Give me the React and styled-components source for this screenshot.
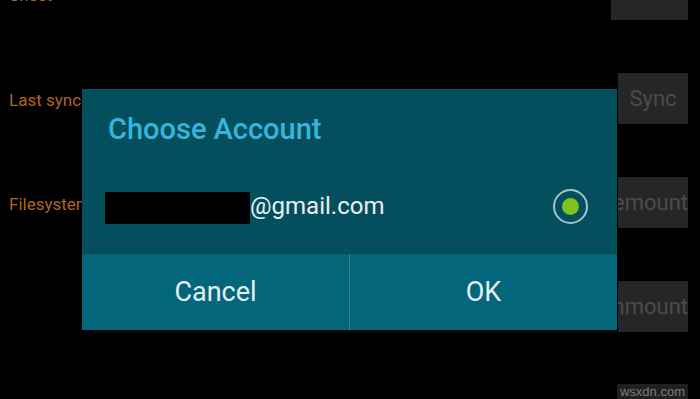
import React from "react";
import styled, { createGlobalStyle } from "styled-components";

const GlobalStyle = createGlobalStyle`
  html, body {
    margin: 0;
    padding: 0;
    background: #000;
    width: 700px;
    height: 399px;
    overflow: hidden;
    font-family: Roboto, "Noto Sans", sans-serif;
  }
`;

const Root = styled.div`
  position: relative;
  width: 700px;
  height: 399px;
  overflow: hidden;
  background: #000;
`;

const Settings = styled.div`
  display: flex;
  flex-direction: column;
  gap: 53px;
  padding: 0 12px 0 9px;
  margin-top: -31px;
`;

const Row = styled.div`
  display: flex;
  align-items: center;
  justify-content: space-between;
  height: 51px;
`;

const Label = styled.span`
  color: #b0661f;
  font-size: 17px;
  white-space: nowrap;
  margin-top: ${(p) => p.$shift || 0}px;
`;

const GrayButton = styled.div`
  width: ${(p) => p.$width || 70}px;
  height: 51px;
  background: #252628;
  display: flex;
  align-items: ${(p) => (p.$top ? "flex-end" : "center")};
  justify-content: ${(p) => (p.$end ? "flex-end" : "center")};
  overflow: hidden;
  color: ${(p) => (p.$bright ? "#b4b5b7" : "#4b4c4e")};
  font-size: ${(p) => (p.$bright ? 24 : 22)}px;
  white-space: nowrap;
  span {
    margin-bottom: ${(p) => (p.$top ? "15px" : "0")};
  }
`;

const Watermark = styled.div`
  position: absolute;
  left: 617px;
  top: 384px;
  width: 71px;
  height: 15px;
  background: #202022;
  color: #7c7c7c;
  font-family: "Liberation Sans", Arial, sans-serif;
  font-size: 13px;
  line-height: 15px;
  text-align: center;
`;

const Dialog = styled.div`
  position: absolute;
  left: 82px;
  top: 89px;
  width: 535px;
  height: 241px;
  display: flex;
  flex-direction: column;
  background: #034f5e;
`;

const Title = styled.div`
  height: 80px;
  line-height: 80px;
  padding-left: 26px;
  color: #38b4dd;
  font-size: 29px;
  font-weight: 500;
`;

const AccountRow = styled.div`
  height: 74px;
  display: flex;
  align-items: center;
  padding: 0 29px 0 23px;
  margin-bottom: 10px;
`;

const Redacted = styled.div`
  width: 145px;
  height: 32px;
  margin-top: 4px;
  background: #000;
`;

const Email = styled.span`
  flex: 1;
  color: #e9f0f1;
  font-size: 24px;
`;

const Radio = styled.div`
  width: 31px;
  height: 31px;
  border: 2px solid #a7c3c8;
  border-radius: 50%;
  display: flex;
  align-items: center;
  justify-content: center;
  &::after {
    content: "";
    width: 17px;
    height: 17px;
    border-radius: 50%;
    background: #7ec31d;
  }
`;

const Buttons = styled.div`
  flex: 1;
  display: flex;
  border-top: 1px solid #034756;
  background: #03667a;
`;

const DialogButton = styled.div`
  flex: 1;
  display: flex;
  align-items: center;
  justify-content: center;
  color: #e4eff1;
  font-size: 27px;
  & + & {
    border-left: 1px solid #3d7f8d;
  }
`;

export default function App() {
  return (
    <Root>
      <GlobalStyle />
      <Settings>
        <Row>
          <Label $shift={1}>Sheet</Label>
          <GrayButton $top $bright $width={77}>
            <span>Account</span>
          </GrayButton>
        </Row>
        <Row>
          <Label $shift={2}>Last sync</Label>
          <GrayButton>Sync</GrayButton>
        </Row>
        <Row>
          <Label $shift={2}>Filesystem</Label>
          <GrayButton $end>Remount</GrayButton>
        </Row>
        <Row>
          <Label />
          <GrayButton $end>Unmount</GrayButton>
        </Row>
      </Settings>
      <Watermark>wsxdn.com</Watermark>
      <Dialog>
        <Title>Choose Account</Title>
        <AccountRow>
          <Redacted />
          <Email>@gmail.com</Email>
          <Radio />
        </AccountRow>
        <Buttons>
          <DialogButton>Cancel</DialogButton>
          <DialogButton>OK</DialogButton>
        </Buttons>
      </Dialog>
    </Root>
  );
}
